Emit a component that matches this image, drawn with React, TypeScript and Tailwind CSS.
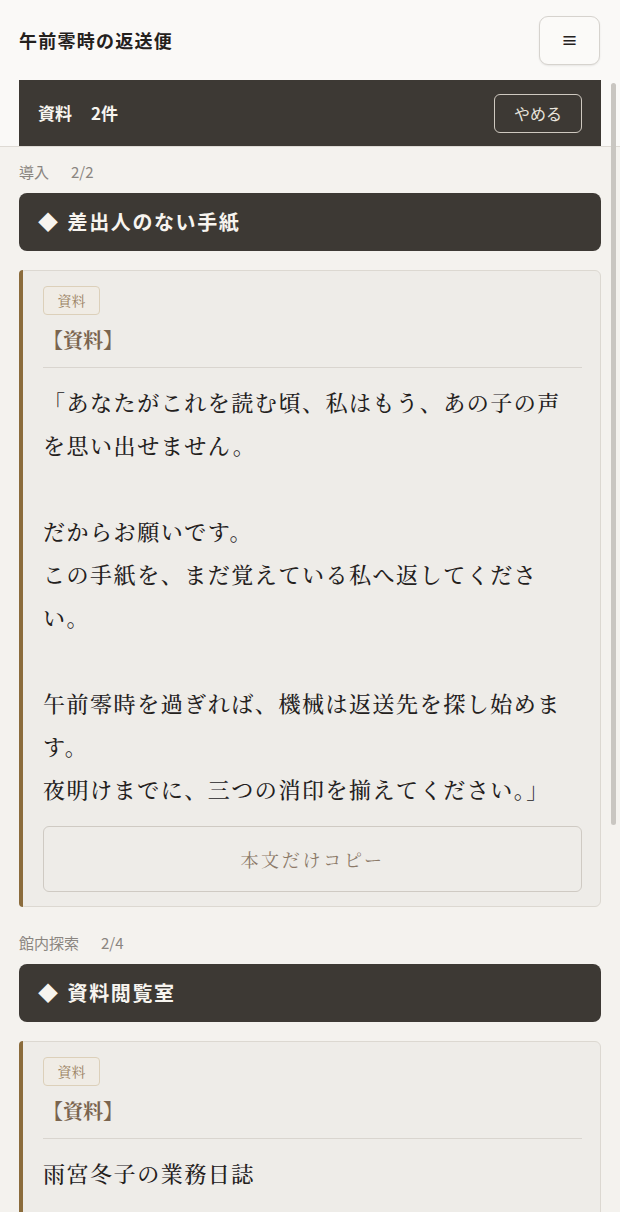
import React from "react";

const serif = { fontFamily: '"Noto Serif CJK JP", "Liberation Serif", "Noto Sans CJK JP", serif' };

const body1 =
  "「あなたがこれを読む頃、私はもう、あの子の声を思い出せません。\n\nだからお願いです。\nこの手紙を、まだ覚えている私へ返してください。\n\n午前零時を過ぎれば、機械は返送先を探し始めます。\n夜明けまでに、三つの消印を揃えてください。」";

function Section({
  label,
  count,
  title,
  text,
  copy,
}: {
  label: string;
  count: string;
  title: string;
  text: string;
  copy?: boolean;
}) {
  return (
    <section className="flex flex-col">
      <div className="flex items-center gap-[22px] text-[15px] leading-[20px] text-[#8a8580]">
        <span>{label}</span>
        <span>{count}</span>
      </div>
      <div className="mt-[11px] flex h-[58px] items-center gap-[8px] rounded-[8px] bg-[#3d3934] px-[19px] text-[20px] font-bold tracking-[0.08em] text-[#f7f4ef]">
        <span className="text-[20px]">◆</span>
        <span>{title}</span>
      </div>
      <div className="mt-[19px] flex rounded-[6px] border border-[#dcd8d1] bg-[#eeece8]">
        <div className="w-[4px] shrink-0 rounded-l-[5px] bg-[#8b6c3c] -my-px -ml-px" />
        <div
          className={
            copy
              ? "flex min-w-0 flex-1 flex-col pb-[14px] pl-[20px] pr-[18px] pt-[15px]"
              : "flex min-w-0 flex-1 flex-col pb-[60px] pl-[20px] pr-[18px] pt-[15px]"
          }
          style={serif}
        >
          <div className="flex">
            <span className="flex h-[29px] w-[57px] items-center justify-center rounded-[4px] border border-[#dcd0ba] bg-[#f0ece5] text-[14px] text-[#9a8262]">
              資料
            </span>
          </div>
          <div className="mt-[10px] border-b border-[#d9d5cf] pb-[12px] text-[20px] font-bold leading-[30px] text-[#7a644f]">
            【資料】
          </div>
          <div className="mt-[12px] whitespace-pre-line text-[22px] font-medium leading-[43px] tracking-[0.07em] text-[#24211d]">
            {text}
          </div>
          {copy && (
            <button className="mt-[16px] flex h-[66px] items-center justify-center rounded-[6px] border border-[#cfcac3] bg-[#eeece8] text-[18px] tracking-[0.15em] text-[#8c7a68]" style={serif}>
              本文だけコピー
            </button>
          )}
        </div>
      </div>
    </section>
  );
}

export default function App() {
  return (
    <div
      className="relative min-h-[1212px] w-full overflow-hidden bg-[#f4f2ee]"
      style={{ fontFamily: '"Noto Sans CJK JP", "Noto Sans", Roboto, sans-serif' }}
    >
      <header className="border-b border-[#dedad4] bg-[#faf9f7]">
        <div className="flex h-[80px] items-center justify-between pl-[19px] pr-[20px]">
          <h1 className="text-[18px] font-bold tracking-[0.07em] text-[#24211d]">午前零時の返送便</h1>
          <button className="flex h-[49px] w-[61px] items-center justify-center rounded-[9px] border border-[#d6d3ce] bg-[#fbfaf8] text-[17px] font-bold text-[#24211d] shadow-[0_1px_2px_rgba(0,0,0,0.08)]">
            ≡
          </button>
        </div>
        <div className="mx-[19px] flex h-[66px] items-center justify-between bg-[#3d3934] pl-[19px] pr-[19px]">
          <div className="flex items-center gap-[19px] text-[17px] font-bold text-[#f7f4ef]">
            <span>資料</span>
            <span>2件</span>
          </div>
          <button className="flex h-[39px] w-[88px] items-center justify-center rounded-[6px] border border-[#cfc9c0] text-[16px] text-[#e9e5de]">
            やめる
          </button>
        </div>
      </header>
      <main className="flex flex-col gap-[26px] px-[19px] pt-[15px] pb-[40px]">
        <Section label="導入" count="2/2" title="差出人のない手紙" text={body1} copy />
        <Section label="館内探索" count="2/4" title="資料閲覧室" text={"雨宮冬子の業務日誌"} />
      </main>
      <div className="absolute right-[4px] top-[83px] h-[742px] w-[5px] rounded-full bg-[#c9c6c1]" />
    </div>
  );
}
